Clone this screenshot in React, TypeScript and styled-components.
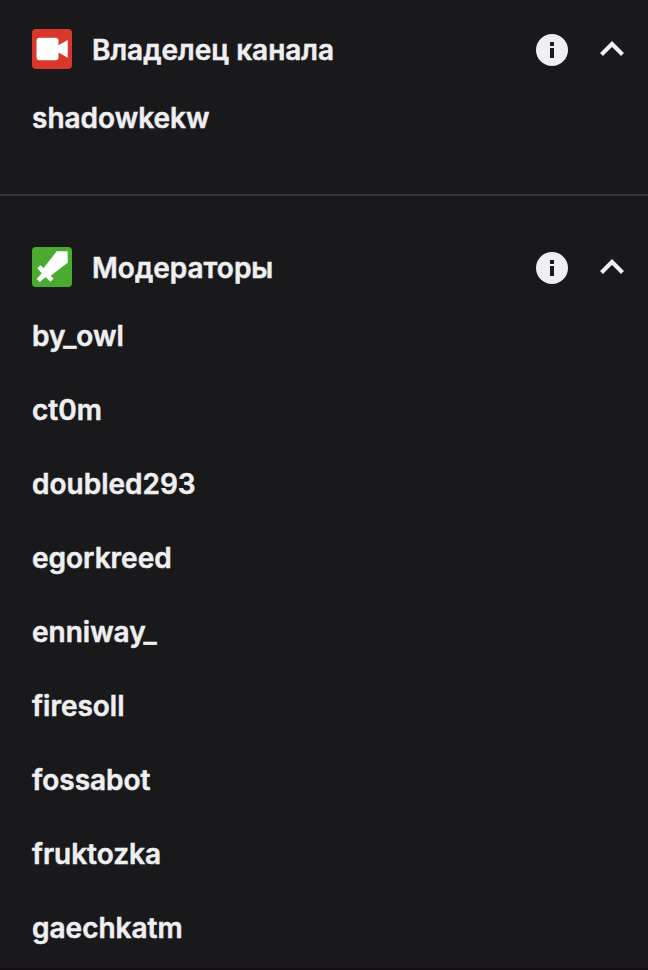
import React from "react";
import styled, { createGlobalStyle } from "styled-components";

const GlobalStyle = createGlobalStyle`
  body { margin: 0; background: #18181b; }
`;
const Panel = styled.main`
  box-sizing: border-box;
  height: 970px;
  overflow: hidden;
  background: #19191b;
  border-bottom: 2px solid #130f14;
  color: #efeff1;
  font-family: Inter, sans-serif;
  font-size: 28px;
  font-weight: 600;
  -webkit-text-stroke: 0.5px currentColor;
`;
const Section = styled.section<{ $divided?: boolean }>`
  box-sizing: border-box;
  padding: 20px 16px 0 32px;
  ${(p) => p.$divided && "height: 196px; border-bottom: 2px solid #35353b;"}
  & + & { padding-top: 42px; }
`;
const Header = styled.header`
  display: flex;
  align-items: center;
  height: 60px;
`;
const Badge = styled.svg`
  flex: none;
  width: 40px;
  height: 40px;
  margin-bottom: 2px;
`;
const Title = styled.h2`
  flex: 1;
  margin: 0 0 0 20px;
  font: inherit;
  line-height: 40px;
`;
const IconButton = styled.button`
  display: flex;
  align-items: center;
  justify-content: center;
  width: 60px;
  height: 60px;
  padding: 0;
  border: 0;
  background: none;
  color: inherit;
  &:last-child { margin-right: -10px; }
`;
const Names = styled.ul`
  margin: 0;
  padding: 0;
  list-style: none;
`;
const Name = styled.li`
  height: 74px;
  line-height: 76px;
`;

const CameraBadge = () => (
  <Badge viewBox="0 0 40 40">
    <rect width="40" height="40" rx="4" fill="#d8372b" />
    <path fill="#fff" d="M7.500 8.700h16a3 3 0 0 1 3 3v4.500l9.200-5.200v17.700l-9.200-5.200v4.800a3 3 0 0 1-3 3h-16a3 3 0 0 1-3-3V11.700a3 3 0 0 1 3-3z" />
  </Badge>
);
const SwordBadge = () => (
  <Badge viewBox="0 0 40 40">
    <rect width="40" height="40" rx="4" fill="#4bab2f" />
    <path fill="#fff" d="M24.700 4.300H35.700V15.800L18.700 28.800L21.500 31.700L18.500 34.700L13.500 30.300L7.800 35L4.700 31.900L9.700 26.200L5.300 21.200L8.300 18.300L11.600 21z" />
  </Badge>
);
const InfoIcon = () => (
  <svg width="32" height="32" viewBox="0 0 32 32">
    <circle cx="16" cy="16" r="16" fill="currentColor" />
    <path fill="#19191b" d="M14 8h4v4h-4zM14 14h4v10h-4z" />
  </svg>
);
const ChevronIcon = () => (
  <svg width="40" height="40" viewBox="0 0 40 40">
    <path d="M9.500 24.500 20 14l10.500 10.500" fill="none" stroke="currentColor" strokeWidth="4.200" />
  </svg>
);

function RoleSection({ badge, title, names, divided }: {
  badge: React.ReactNode; title: string; names: string[]; divided?: boolean;
}) {
  return (
    <Section $divided={divided}>
      <Header>
        {badge}
        <Title>{title}</Title>
        <IconButton aria-label="Информация"><InfoIcon /></IconButton>
        <IconButton aria-label="Свернуть"><ChevronIcon /></IconButton>
      </Header>
      <Names>{names.map((n) => <Name key={n}>{n}</Name>)}</Names>
    </Section>
  );
}

const moderators = ["by_owl", "ct0m", "doubled293", "egorkreed", "enniway_", "firesoll", "fossabot", "fruktozka", "gaechkatm"];

export default function App() {
  return (
    <Panel>
      <GlobalStyle />
      <RoleSection badge={<CameraBadge />} title="Владелец канала" names={["shadowkekw"]} divided />
      <RoleSection badge={<SwordBadge />} title="Модераторы" names={moderators} />
    </Panel>
  );
}
